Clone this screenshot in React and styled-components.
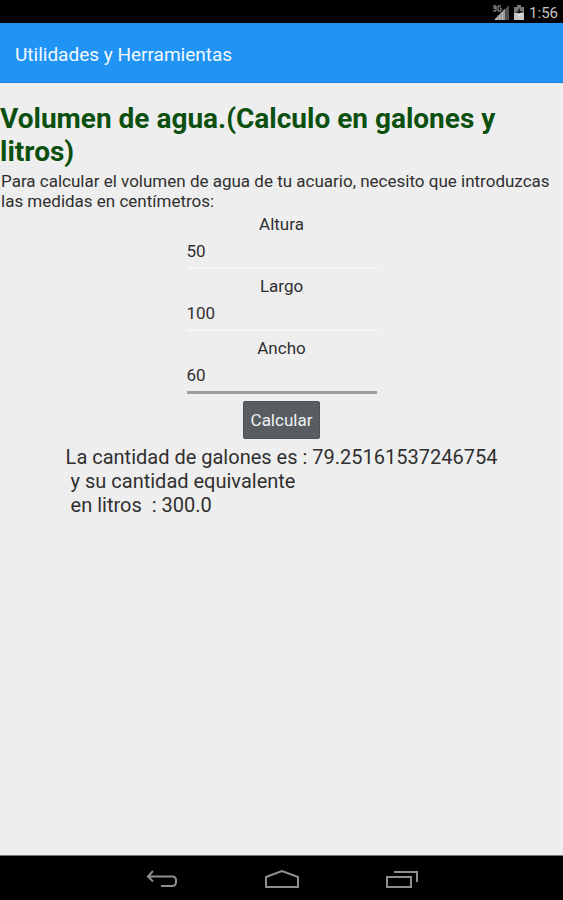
import React, { useState } from "react";
import styled, { createGlobalStyle } from "styled-components";

const GlobalStyle = createGlobalStyle`
  *, *::before, *::after { box-sizing: border-box; }
  body {
    margin: 0;
    background: #eeeeee;
    color: #303030;
    font-family: Roboto, "Liberation Sans", sans-serif;
    font-size: 17px;
    line-height: 20px;
  }
`;

const Screen = styled.div`
  min-height: 100vh;
  display: flex;
  flex-direction: column;
`;

const StatusBar = styled.div`
  height: 23px;
  padding: 2px 5px 0 0;
  display: flex;
  align-items: center;
  justify-content: flex-end;
  gap: 5px;
  background: #000;
  color: #c4c4c4;
  font-size: 15px;
`;

const AppBar = styled.header`
  height: 60px;
  padding: 4px 15px 0;
  display: flex;
  align-items: center;
  background: #2094f5;
  border-bottom: 1px solid #1c80d4;
  color: #f2f8ff;
`;

const AppTitle = styled.div`
  font-size: 19px;
  line-height: 24px;
`;

const Content = styled.main`
  flex: 1;
  padding-top: 19px;
  display: flex;
  flex-direction: column;
`;

const Heading = styled.h1`
  margin: 0 0 3px;
  color: #0b500f;
  font-size: 28px;
  font-weight: 700;
  line-height: 33px;
`;

const Intro = styled.p`
  margin: 0 0 3px;
  padding-left: 1px;
`;

const Form = styled.form`
  display: flex;
  flex-direction: column;
  align-items: center;
`;

const Field = styled.div`
  width: 190px;
  height: 62px;
  display: flex;
  flex-direction: column;
`;

const Label = styled.label`
  text-align: center;
`;

const NumberInput = styled.input`
  width: 100%;
  height: ${(p) => (p.$active ? "36px" : "35px")};
  padding: 0;
  border: 0;
  border-bottom: ${(p) => (p.$active ? "3px solid #98a29b" : "2px solid #f6f6f6")};
  border-radius: 0;
  outline: 0;
  background: transparent;
  color: inherit;
  font: inherit;
`;

const Button = styled.button`
  height: 38px;
  margin-top: 1px;
  padding: 0 7px;
  border: 1px solid #4e5355;
  border-radius: 2px;
  background: #575d60;
  color: #f0f1f1;
  font: inherit;
`;

const Result = styled.output`
  align-self: center;
  margin-top: 6px;
  font-size: 20px;
  line-height: 24px;
  white-space: pre-wrap;
`;

const NavBar = styled.nav`
  height: 45px;
  padding-top: 3px;
  display: flex;
  align-items: center;
  justify-content: center;
  gap: 72px;
  background: #000;
  border-top: 1px solid #777;
`;

const NavButton = styled.button`
  width: 48px;
  height: 40px;
  padding: 0;
  display: flex;
  align-items: center;
  justify-content: center;
  border: 0;
  background: transparent;
  color: #8e8e8e;
`;

const Icon = styled.svg`
  display: block;
  fill: none;
  stroke: currentColor;
  stroke-width: 2;
`;

const Indicators = styled.div`
  display: flex;
  align-items: center;
  gap: 4px;
`;

function SignalIcon() {
  return (
    <Icon width="17" height="17" viewBox="0 0 17 17" aria-label="Señal 3G">
      <path d="M16 1v15H1z" fill="#4c4c4c" stroke="none" />
      <path d="M2 16v-1l10-10v11z" fill="#bdbdbd" stroke="none" />
      <path d="M5 16v-5M8 16V8M11 16V5" stroke="#777" strokeWidth="1" />
      <path d="M0 2h3v5H0M0 4h3M8 2H5v5h3V4H7" stroke="#a8a8a8" strokeWidth="1" />
    </Icon>
  );
}

function BatteryIcon() {
  return (
    <Icon width="10" height="15" viewBox="0 0 10 15" aria-label="Batería">
      <path d="M3 0h4v2h3v13H0V2h3z" fill="#777" stroke="none" />
      <path d="M0 8h10v7H0z" fill="#c8c8c8" stroke="none" />
      <path d="M6 3L2 8h3v1l4-3H6z" fill="#181818" stroke="none" />
      <path d="M4 9l4-1-3 4z" fill="#e8e8e8" stroke="none" />
    </Icon>
  );
}

const FIELDS = [
  { id: "altura", label: "Altura" },
  { id: "largo", label: "Largo" },
  { id: "ancho", label: "Ancho" },
];

export default function App() {
  const [values, setValues] = useState({ altura: "50", largo: "100", ancho: "60" });
  const [active, setActive] = useState("ancho");
  const [result, setResult] = useState({ gallons: "79.25161537246754", liters: "300.0" });

  const calculate = (event) => {
    event.preventDefault();
    const liters = (values.altura * values.largo * values.ancho) / 1000;
    setResult({
      gallons: String(liters * 0.2641720512415585),
      liters: Number.isInteger(liters) ? liters.toFixed(1) : String(liters),
    });
  };

  return (
    <Screen>
      <GlobalStyle />
      <StatusBar>
        <Indicators>
          <SignalIcon />
          <BatteryIcon />
        </Indicators>
        <span>1:56</span>
      </StatusBar>
      <AppBar>
        <AppTitle>Utilidades y Herramientas</AppTitle>
      </AppBar>
      <Content>
        <Heading>Volumen de agua.(Calculo en galones y litros)</Heading>
        <Intro>
          Para calcular el volumen de agua de tu acuario, necesito que introduzcas las medidas en centímetros:
        </Intro>
        <Form onSubmit={calculate}>
          {FIELDS.map(({ id, label }) => (
            <Field key={id}>
              <Label htmlFor={id}>{label}</Label>
              <NumberInput
                id={id}
                inputMode="decimal"
                value={values[id]}
                $active={active === id}
                onFocus={() => setActive(id)}
                onChange={(e) => setValues({ ...values, [id]: e.target.value })}
              />
            </Field>
          ))}
          <Button type="submit">Calcular</Button>
        </Form>
        <Result>{`La cantidad de galones es : ${result.gallons}\n y su cantidad equivalente\n en litros  : ${result.liters}`}</Result>
      </Content>
      <NavBar>
        <NavButton aria-label="Atrás">
          <Icon width="32" height="20" viewBox="0 0 32 20">
            <path d="M7 1L2 6.500l5 5M2 6.500h24q4 0 4 3.500v2q0 4-4 4H15" />
          </Icon>
        </NavButton>
        <NavButton aria-label="Inicio">
          <Icon width="36" height="20" viewBox="0 0 36 20">
            <path d="M2 17V7l16-6 16 6v10z" />
          </Icon>
        </NavButton>
        <NavButton aria-label="Recientes">
          <Icon width="34" height="20" viewBox="0 0 34 20">
            <path d="M2 7h24v10H2zM9 2h23v10" />
          </Icon>
        </NavButton>
      </NavBar>
    </Screen>
  );
}
